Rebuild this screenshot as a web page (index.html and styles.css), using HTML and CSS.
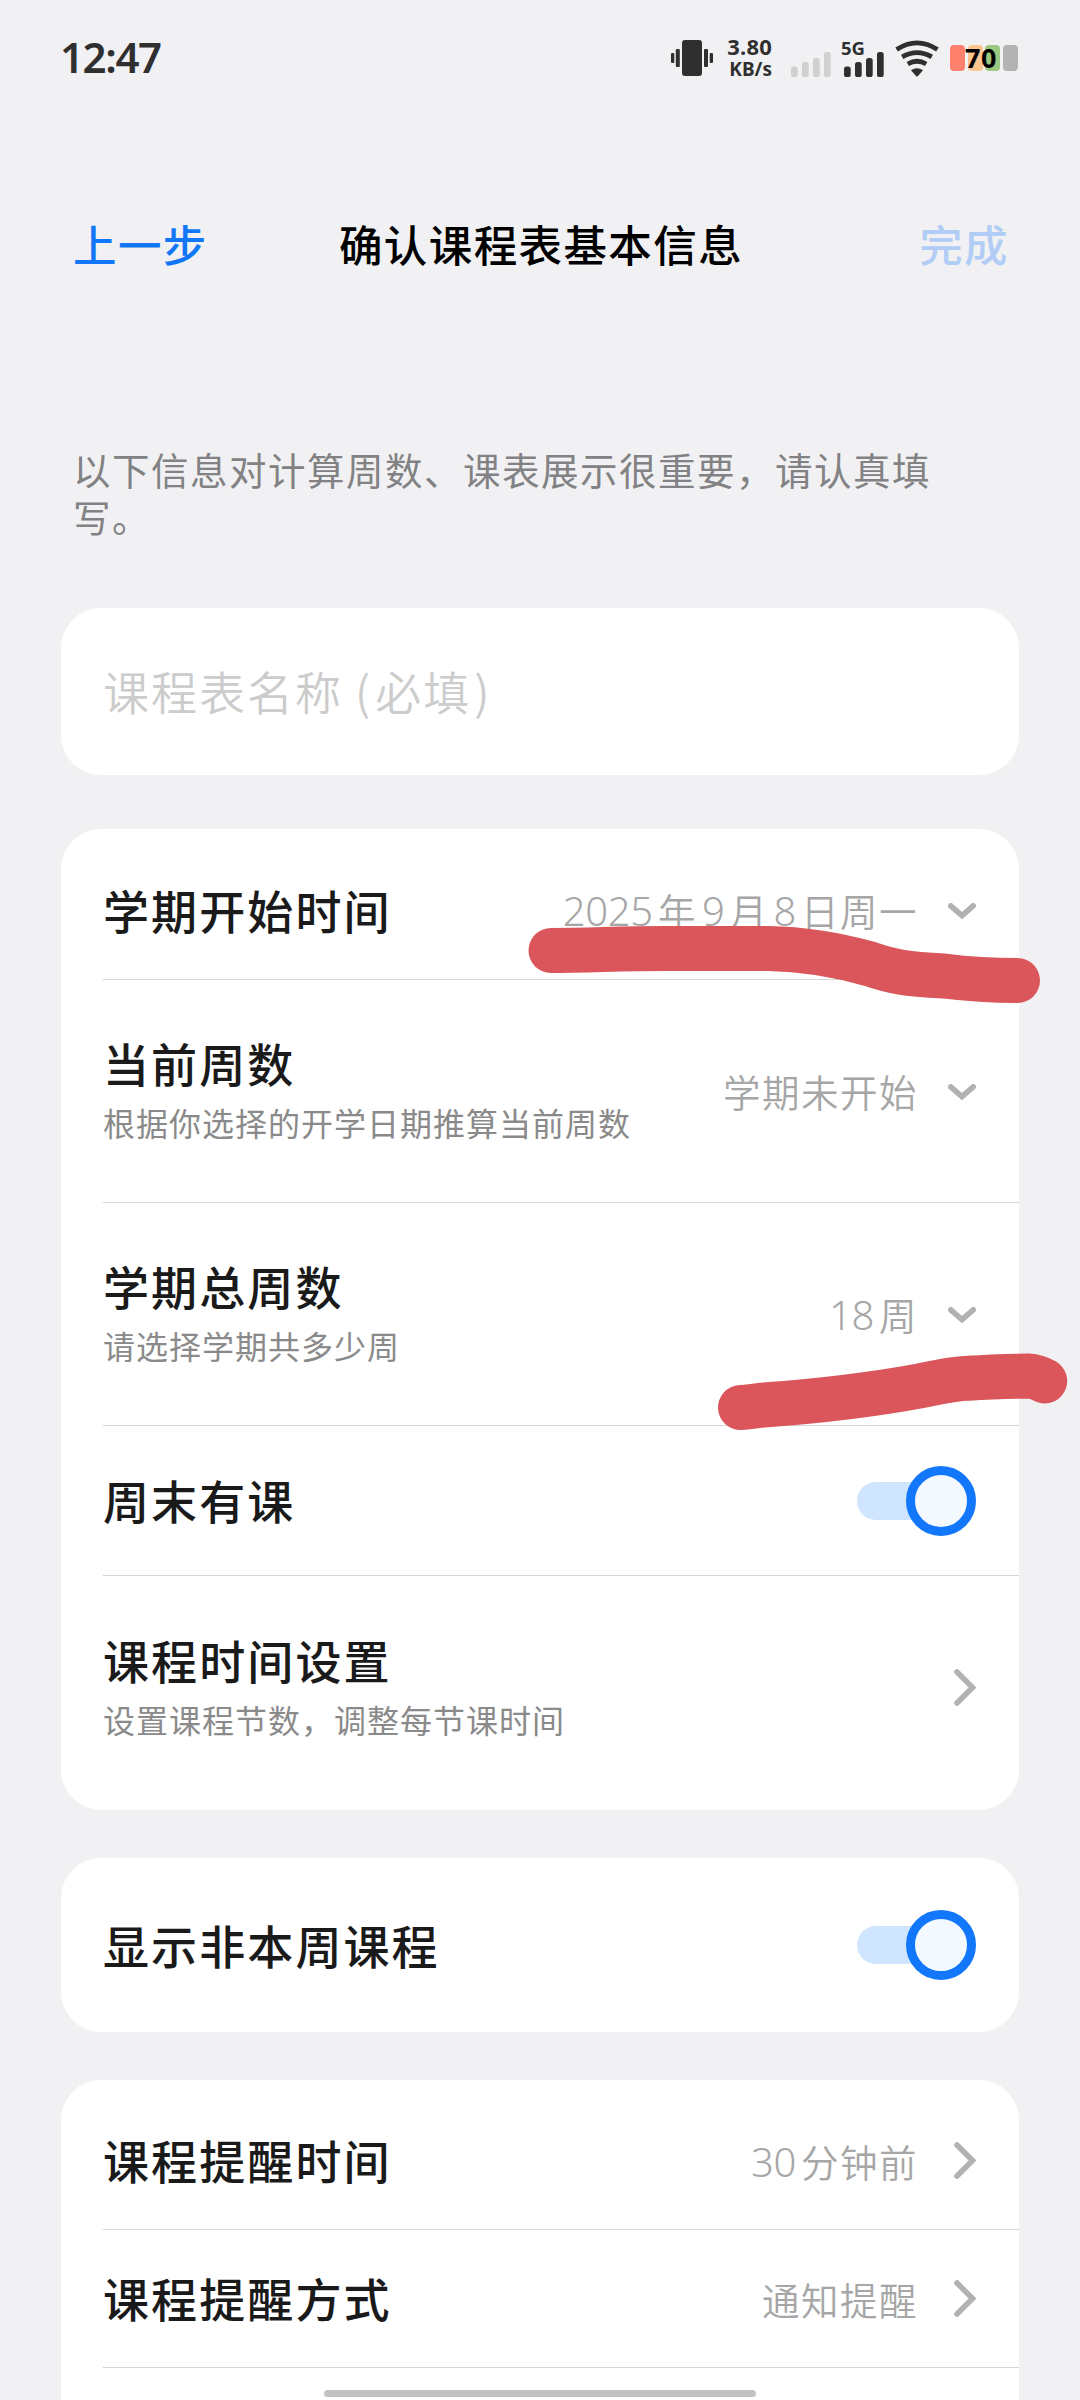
FILE: index.html
```html
<!DOCTYPE html>
<html lang="zh-CN">
<head>
<meta charset="utf-8">
<title>确认课程表基本信息</title>
<link rel="stylesheet" href="styles.css">
</head>
<body>
<div class="screen">
  <header class="status">
    <span class="clock">12:47</span>
    <div class="tray">
      <svg class="vibrate" width="42" height="36" viewBox="0 0 42 36">
        <rect x="0" y="13" width="3.3" height="10" rx="1"/><rect x="4.8" y="9" width="4" height="18" rx="1"/>
        <rect x="11" y="0" width="20" height="36" rx="3"/>
        <rect x="33" y="9" width="4" height="18" rx="1"/><rect x="38.7" y="13" width="3.3" height="10" rx="1"/>
      </svg>
      <div class="speed"><span class="rate">3.80</span><span class="unit">KB/s</span></div>
      <svg class="signal weak" width="40" height="25" viewBox="0 0 40 25">
        <rect x="0" y="14.5" width="6.7" height="10.5" rx="2.6"/><rect x="11" y="10" width="6.7" height="15" rx="2.6"/>
        <rect x="22" y="6" width="6.7" height="19" rx="2.6"/><rect x="33" y="0" width="6.7" height="25" rx="2.6"/>
      </svg>
      <div class="cell">
        <span class="gen">5G</span>
        <svg class="signal" width="40" height="25" viewBox="0 0 40 25">
          <rect x="0" y="14.5" width="6.7" height="10.5" rx="2.6"/><rect x="11" y="10" width="6.7" height="15" rx="2.6"/>
          <rect x="22" y="6" width="6.7" height="19" rx="2.6"/><rect x="33" y="0" width="6.7" height="25" rx="2.6"/>
        </svg>
      </div>
      <svg class="wifi" width="44" height="37" viewBox="0 0 44 37">
        <path class="arc" d="M1.6 9.5Q22 -3.8 42.4 9.5M7.2 16.8Q22 8.4 36.8 16.8M12.8 24Q22 18.6 31.2 24"/>
        <path d="M16 30.2Q22 26.4 28 30.2L23 36Q22 37 21 36Z"/>
      </svg>
      <div class="battery">
        <i class="seg red"></i><i class="seg orange"></i><i class="seg green"></i><i class="seg gray"></i>
        <span class="level">70</span>
      </div>
    </div>
  </header>

  <nav class="nav">
    <span class="back">上一步</span>
    <h1 class="heading">确认课程表基本信息</h1>
    <span class="done">完成</span>
  </nav>

  <p class="tip">以下信息对计算周数、课表展示很重要，请认真填写。</p>

  <main class="cards">
    <section class="card name"><span class="placeholder">课程表名称<span class="open">(</span>必填<span class="close">)</span></span></section>

    <section class="card term">
      <div class="row">
        <span class="title">学期开始时间</span>
        <span class="value"><span class="num first">2025</span>年<span class="num">9</span>月<span class="num">8</span>日周一</span>
        <svg class="down" width="28" height="16" viewBox="0 0 28 16"><path d="M2.8 2.8L14 12.6L25.2 2.8"/></svg>
      </div>
      <div class="row tall">
        <div class="text"><span class="title">当前周数</span><span class="sub">根据你选择的开学日期推算当前周数</span></div>
        <span class="value">学期未开始</span>
        <svg class="down" width="28" height="16" viewBox="0 0 28 16"><path d="M2.8 2.8L14 12.6L25.2 2.8"/></svg>
      </div>
      <div class="row tall">
        <div class="text"><span class="title">学期总周数</span><span class="sub">请选择学期共多少周</span></div>
        <span class="value"><span class="num first">18</span>周</span>
        <svg class="down" width="28" height="16" viewBox="0 0 28 16"><path d="M2.8 2.8L14 12.6L25.2 2.8"/></svg>
      </div>
      <div class="row switch">
        <span class="title">周末有课</span>
        <span class="toggle"><i class="knob"></i></span>
      </div>
      <div class="row tall">
        <div class="text"><span class="title">课程时间设置</span><span class="sub">设置课程节数，调整每节课时间</span></div>
        <svg class="next" width="22" height="37" viewBox="0 0 22 37"><path d="M3 3L18.5 18.5L3 34"/></svg>
      </div>
    </section>

    <section class="card other">
      <div class="row">
        <span class="title">显示非本周课程</span>
        <span class="toggle"><i class="knob"></i></span>
      </div>
    </section>

    <section class="card remind">
      <div class="row">
        <span class="title">课程提醒时间</span>
        <span class="value"><span class="num first">30</span>分钟前</span>
        <svg class="next" width="22" height="37" viewBox="0 0 22 37"><path d="M3 3L18.5 18.5L3 34"/></svg>
      </div>
      <div class="row">
        <span class="title">课程提醒方式</span>
        <span class="value">通知提醒</span>
        <svg class="next" width="22" height="37" viewBox="0 0 22 37"><path d="M3 3L18.5 18.5L3 34"/></svg>
      </div>
    </section>
  </main>

  <svg class="marks" width="1080" height="2400" viewBox="0 0 1080 2400">
    <path d="M551 950.5C590 950.5 620 948.5 666 948.5L768 948.5C800 949 838 955 870 964C893 972 906 974 944 976C968 979 985 980.5 1017.5 980.5"/>
    <path d="M740.5 1407.5C750 1407 756 1405.5 767 1404.8C830 1400 870 1395 920 1385.8C940 1382 955 1378.5 968 1378.3C990 1376.8 1005 1376.3 1028 1376Q1037 1376.5 1044.7 1381"/>
  </svg>
  <div class="home"></div>
</div>
</body>
</html>
```
FILE: styles.css
```css
* { box-sizing: border-box; }
body {
  margin: 0;
  background: #f1f1f3;
  font-family: "Noto Sans CJK SC", sans-serif;
}
.screen {
  position: relative;
  width: 1080px;
  height: 2400px;
  overflow: hidden;
}
svg { display: block; flex: none; }

/* status bar */
.status {
  display: flex;
  justify-content: space-between;
  align-items: flex-start;
  height: 172px;
  padding: 38px 62px 0 60px;
  color: #2f2f30;
  font-family: "Noto Sans", sans-serif;
}
.clock { font-size: 42px; font-weight: 600; line-height: 38px; letter-spacing: -1.4px; }
.tray { display: flex; align-items: flex-start; height: 40px; }
.vibrate { margin-top: 2px; fill: #2f2f30; }
.speed {
  display: flex;
  flex-direction: column;
  align-items: flex-end;
  width: 59px;
  margin: -3px 1px 0 0;
  font-weight: 700;
}
.rate { font-size: 22px; line-height: 22px; letter-spacing: 0.2px; }
.unit { font-size: 19px; line-height: 24px; }
.signal { fill: #2f2f30; }
.weak { margin: 14px 0 0 18px; fill: #d0d0d1; }
.cell { width: 40px; margin-left: 13px; }
.gen { display: block; height: 14px; margin-left: -3px; font-size: 18.5px; font-weight: 700; line-height: 20px; }
.wifi { margin: 2px 0 0 11px; fill: #2f2f30; }
.arc { fill: none; stroke: #2f2f30; stroke-width: 4.8; }
.battery { position: relative; display: flex; gap: 2.6px; width: 68px; margin: 7px 0 0 11px; }
.seg { width: 15px; height: 26px; border-radius: 4px; }
.red { background: #ff806c; }
.orange { background: #fcc590; }
.green { background: #9cc780; }
.gray { background: #b3b3b3; }
.level {
  position: absolute;
  left: 15px;
  top: 0;
  color: #000;
  font-size: 27px;
  font-weight: 700;
  line-height: 25px;
  letter-spacing: 0.5px;
}

/* navigation */
.nav {
  display: grid;
  grid-template-columns: 200px 1fr 200px;
  align-items: center;
  height: 143px;
  padding: 0 71px 0 73px;
  font-size: 43.5px;
  font-weight: 500;
  letter-spacing: 1.4px;
}
.back { color: #1277f6; }
.heading { margin: 0; color: #000; font-size: inherit; font-weight: 500; text-align: center; white-space: nowrap; }
.done { color: #b1cdf5; text-align: right; }

.tip {
  height: 163px;
  margin: 130px 130px 0 73px;
  color: #828284;
  font-size: 37.5px;
  line-height: 47px;
  letter-spacing: 1.5px;
}

/* cards */
.cards { display: flex; flex-direction: column; padding: 0 61px; }
.card { border-radius: 40px; background: #fff; padding-left: 42px; }
.name { display: flex; align-items: center; height: 167px; margin-bottom: 54px; }
.placeholder { margin-top: -4px; color: #ccc; font-size: 46px; font-weight: 350; letter-spacing: 2px; }
.open { margin: 0 3px 0 12px; }
.close { margin-left: 3px; }
.term { height: 981px; margin-bottom: 48px; padding-top: 12px; }
.other { height: 174px; margin-bottom: 48px; }
.other .row { height: 174px; }
.remind { height: 360px; padding-top: 12px; border-radius: 40px 40px 0 0; }
.remind .row { height: 138px; }
.row {
  display: flex;
  align-items: center;
  height: 139px;
  padding-right: 43px;
  border-bottom: 1px solid #d5d5d5;
}
.term .row { height: 139px; }
.term .switch { height: 150px; }
.term .tall { height: 223px; }
.term .row:last-child, .other .row { border-bottom: 0; }
.text { display: flex; flex: 1; flex-direction: column; margin-top: -3px; }
.title { flex: 1; margin-top: -2px; color: #1a1a1a; font-size: 46px; font-weight: 500; line-height: 65px; letter-spacing: 2.1px; }
.text .title { flex: none; margin-top: 0; }
.sub { color: #8a8a8a; font-size: 32px; line-height: 54px; letter-spacing: 1px; }
.value { color: #a6a6a6; font-size: 37.5px; font-weight: 350; line-height: 54px; letter-spacing: 1.5px; }
.num { margin: 0 5px; font-family: "Noto Sans", sans-serif; font-size: 40px; font-weight: 360; line-height: 0; letter-spacing: -0.3px; }
.first { margin-left: 0; }
.down { margin: 2px 0 0 30px; }
.next { margin-left: 36px; }
.down path, .next path { fill: none; stroke: #b2b2b2; stroke-width: 5.6; stroke-linecap: round; }
.toggle {
  display: flex;
  justify-content: flex-end;
  align-items: center;
  width: 119px;
  height: 38px;
  border-radius: 19px;
  background: #cfe4ff;
}
.knob {
  flex: none;
  width: 70px;
  height: 70px;
  border: 9px solid #1277fb;
  border-radius: 50%;
  background: #f4f9ff;
}

/* pen strokes over the form */
.marks { position: absolute; left: 0; top: 0; pointer-events: none; }
.marks path { fill: none; stroke: #da565b; stroke-width: 45; stroke-linecap: round; stroke-linejoin: round; }
.home {
  position: absolute;
  left: 324px;
  bottom: 3px;
  width: 432px;
  height: 7px;
  border-radius: 4px;
  background: #c2c2c2;
}
```
